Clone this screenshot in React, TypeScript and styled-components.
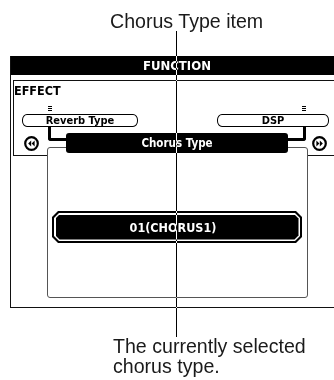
import styled, { createGlobalStyle } from 'styled-components';

const GlobalStyle = createGlobalStyle`
  html, body {
    margin: 0;
    padding: 0;
    background: #fff;
  }
  body {
    font-family: "Liberation Sans", Arial, sans-serif;
  }
`

const lcdFont = `
  font-family: "DejaVu Sans Condensed", "DejaVu Sans", sans-serif;
  font-stretch: condensed;
  font-weight: bold;
`

const chamfer = (n: number) =>
    `polygon(${n}px 0, calc(100% - ${n}px) 0, 100% ${n}px, 100% calc(100% - ${n}px), calc(100% - ${n}px) 100%, ${n}px 100%, 0 calc(100% - ${n}px), 0 ${n}px)`

const Figure = styled.div`
  position: relative;
  width: 334px;
  height: 380px;
  overflow: hidden;
  background: #fff;
  isolation: isolate;
`

const Caption = styled.div<{ $left: number; $top: number }>`
  padding-left: ${p => p.$left}px;
  margin-top: ${p => p.$top}px;
  font-size: 19.6px;
  line-height: 20px;
  color: #1a1a1a;
  white-space: nowrap;
`

const Leader = styled.div`
  position: absolute;
  left: 176px;
  top: 31px;
  width: 1px;
  height: 306px;
  background: #fff;
  mix-blend-mode: difference;
  z-index: 5;
`

const Screen = styled.div`
  margin: 25px 0 0 10px;
  width: 340px;
  border-left: 1px solid #111;
  border-bottom: 1px solid #111;
  padding-bottom: 9px;
`

const TitleBar = styled.div`
  ${lcdFont}
  height: 19px;
  background: #000;
  color: #fff;
  font-size: 13px;
  line-height: 19px;
  padding-left: 132px;
`

const EffectBox = styled.div`
  margin: 5px 0 0 2px;
  height: 74px;
  border: 1px solid #111;
`

const EffectLabel = styled.div`
  ${lcdFont}
  font-size: 12.5px;
  line-height: 12px;
  margin-top: 4px;
  color: #000;
`

const MarkerRow = styled.div`
  display: flex;
  margin-top: 9px;
  padding-left: 34px;
  gap: 250px;
`

const Marker = styled.div`
  width: 4px;
  height: 6px;
  background: repeating-linear-gradient(#000 0 1px, transparent 1px 2px);
`

const ButtonRow = styled.div`
  display: flex;
  margin-top: 2px;
  padding-left: 8px;
  gap: 79px;
`

const TabButton = styled.div<{ $width: number }>`
  ${lcdFont}
  box-sizing: border-box;
  width: ${p => p.$width}px;
  height: 13px;
  border: 1.5px solid #000;
  border-radius: 5px / 6px;
  display: flex;
  align-items: center;
  justify-content: center;
  font-size: 11px;
  color: #000;
`

const NavRow = styled.div`
  display: flex;
  align-items: flex-start;
  margin-top: -23px;
`

const ArrowButton = styled.svg<{ $left: number }>`
  display: block;
  flex: none;
  margin: 3px 0 0 ${p => p.$left}px;
`

const Panel = styled.div`
  box-sizing: border-box;
  margin: 14px 0 0 8px;
  width: 261px;
  height: 151px;
  border: 1px solid #555;
  border-radius: 3px;
  background: #fff;
  position: relative;
  z-index: 1;
  display: flex;
  flex-direction: column;
`

const PanelHeader = styled.div`
  ${lcdFont}
  position: relative;
  margin: -15px 19px 0 18px;
  height: 20px;
  border-radius: 3px;
  background: #000;
  color: #fff;
  font-size: 11.5px;
  display: flex;
  align-items: center;
  justify-content: center;
  &::before, &::after {
    content: '';
    position: absolute;
    top: -6px;
    width: 15px;
    height: 11px;
    border-bottom: 3px solid #000;
  }
  &::before {
    left: -18px;
    border-left: 3px solid #000;
    border-bottom-left-radius: 3px;
  }
  &::after {
    right: -18px;
    border-right: 3px solid #000;
    border-bottom-right-radius: 3px;
  }
`

const ValueOuter = styled.div`
  box-sizing: border-box;
  margin: 58px 0 0 4px;
  width: 250px;
  height: 32px;
  padding: 2px;
  background: #000;
  clip-path: ${chamfer(6)};
`

const ValueRing = styled.div`
  box-sizing: border-box;
  height: 100%;
  padding: 1.5px;
  background: #fff;
  clip-path: ${chamfer(5)};
`

const ValueInner = styled.div`
  ${lcdFont}
  height: 100%;
  background: #000;
  clip-path: ${chamfer(4)};
  color: #fff;
  font-size: 12.5px;
  padding-right: 8px;
  box-sizing: border-box;
  display: flex;
  align-items: center;
  justify-content: center;
`

function Arrow({ dir, left }: { dir: 'left' | 'right'; left: number }) {
    const flip = dir === 'right' ? 'translate(15 0) scale(-1 1)' : undefined
    return <ArrowButton $left={left} width="15" height="15" viewBox="0 0 15 15">
        <g transform={flip}>
            <circle cx="7.5" cy="7.5" r="6.3" fill="#fff" stroke="#000" strokeWidth="2.2" />
            <polygon points="7.2,4.6 4.2,7.5 7.2,10.4" fill="#000" />
            <polygon points="10.6,4.6 7.6,7.5 10.6,10.4" fill="#000" />
        </g>
    </ArrowButton>
}

export default function App() {
    return <Figure>
        <GlobalStyle />
        <Caption $left={110} $top={11}>Chorus Type item</Caption>
        <Screen>
            <TitleBar>FUNCTION</TitleBar>
            <EffectBox>
                <EffectLabel>EFFECT</EffectLabel>
                <MarkerRow>
                    <Marker />
                    <Marker />
                </MarkerRow>
                <ButtonRow>
                    <TabButton $width={116}>Reverb Type</TabButton>
                    <TabButton $width={112}>DSP</TabButton>
                </ButtonRow>
            </EffectBox>
            <NavRow>
                <Arrow dir="left" left={13} />
                <Panel>
                    <PanelHeader>Chorus Type</PanelHeader>
                    <ValueOuter>
                        <ValueRing>
                            <ValueInner>01(CHORUS1)</ValueInner>
                        </ValueRing>
                    </ValueOuter>
                </Panel>
                <Arrow dir="right" left={4} />
            </NavRow>
        </Screen>
        <Caption $left={113} $top={28}>The currently selected<br />chorus type.</Caption>
        <Leader />
    </Figure>
}
